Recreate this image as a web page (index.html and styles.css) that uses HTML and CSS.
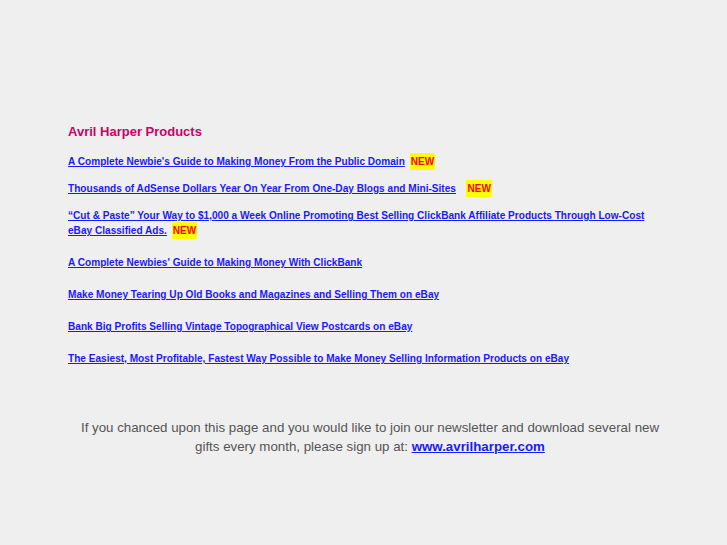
FILE: index.html
```html
<!DOCTYPE html>
<html lang="en">
<head>
    <meta charset="UTF-8">
    <title>Avril Harper Products</title>
    <link rel="stylesheet" href="styles.css">
</head>
<body>
    <div class="container">
        <h2 class="title">Avril Harper Products</h2>
        <ul class="products">
            <li class="tight"><a href="#">A Complete Newbie's Guide to Making Money From the Public Domain</a> <span class="new">NEW</span></li>
            <li class="tight"><a href="#">Thousands of AdSense Dollars Year On Year From One-Day Blogs and Mini-Sites</a> &nbsp; <span class="new">NEW</span></li>
            <li><a href="#">&ldquo;Cut &amp; Paste&rdquo; Your Way to $1,000 a Week Online Promoting Best Selling ClickBank Affiliate Products Through Low-Cost eBay Classified Ads.</a> <span class="new">NEW</span></li>
            <li><a href="#">A Complete Newbies' Guide to Making Money With ClickBank</a></li>
            <li><a href="#">Make Money Tearing Up Old Books and Magazines and Selling Them on eBay</a></li>
            <li><a href="#">Bank Big Profits Selling Vintage Topographical View Postcards on eBay</a></li>
            <li><a href="#">The Easiest, Most Profitable, Fastest Way Possible to Make Money Selling Information Products on eBay</a></li>
        </ul>
        <p class="signup">If you chanced upon this page and you would like to join our newsletter and download several new gifts every month, please sign up at: <a href="#">www.avrilharper.com</a></p>
    </div>
</body>
</html>
```

FILE: styles.css
```css
body {
    margin: 0;
    background-color: #efefef;
    font-family: "Liberation Sans", Arial, sans-serif;
}
.container {
    padding: 124px 0 0 68px;
    width: 582px;
}
.title {
    font-size: 13px;
    color: #cc0066;
    margin: 0 0 15px 0;
}
.products {
    list-style: none;
    margin: 0;
    padding: 0;
}
.products li {
    font-size: 10.1px;
    font-weight: bold;
    line-height: 15px;
    margin-bottom: 17px;
}
.products li.tight {
    margin-bottom: 12px;
}
.products a {
    color: #1a1aff;
}
.new {
    background-color: #ffff00;
    color: #ff0000;
    padding: 3px 1px;
    margin-left: 2px;
}
.signup {
    margin: 52px 0 0 10px;
    width: 584px;
    text-align: center;
    font-size: 13.3px;
    line-height: 19px;
    color: #555;
}
.signup a {
    color: #1a1aff;
    font-weight: bold;
}
```
